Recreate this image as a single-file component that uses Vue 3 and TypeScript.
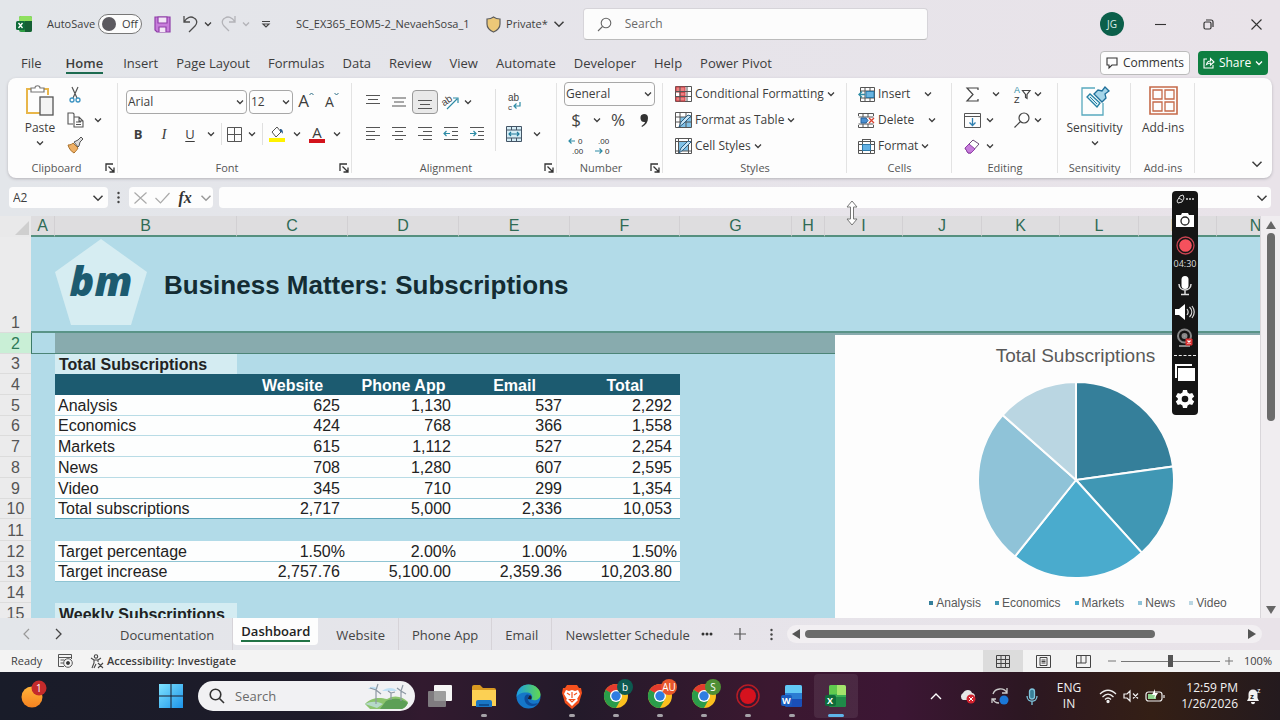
<script setup lang="ts">
import { h, ref } from 'vue'

const Chev = (p: { s?: number }) =>
  h('svg', { width: p.s ?? 8, height: p.s ?? 8, viewBox: '0 0 8 8', fill: 'none', stroke: 'currentColor', 'stroke-width': (p.s ?? 8) > 8 ? 1 : 1.3 }, [
    h('path', { d: 'M1 2.5 4 5.5 7 2.5' }),
  ])

const Launcher = () =>
  h('svg', { width: 10, height: 10, viewBox: '0 0 10 10', fill: 'none', stroke: '#333', 'stroke-width': 1.3 }, [
    h('path', { d: 'M1 8V1h7M3.5 3.5 8.5 8.5M9 4.5V9H4.5' }),
  ])

const Lines = (p: { d: string }) =>
  h('svg', { width: 16, height: 16, viewBox: '0 0 16 16', fill: 'none', stroke: '#555', 'stroke-width': 1.2 }, [h('path', { d: p.d })])

const menu = ['File', 'Home', 'Insert', 'Page Layout', 'Formulas', 'Data', 'Review', 'View', 'Automate', 'Developer', 'Help', 'Power Pivot']
const sheets = ['Documentation', 'Dashboard', 'Website', 'Phone App', 'Email', 'Newsletter Schedule']
const autoSave = ref(false)
const nameBox = ref('A2')
const zoom = ref(50)

const columns = [
  { name: 'A', w: 24 }, { name: 'B', w: 182 }, { name: 'C', w: 111 }, { name: 'D', w: 111 },
  { name: 'E', w: 111 }, { name: 'F', w: 110 }, { name: 'G', w: 112 }, { name: 'H', w: 33 },
  { name: 'I', w: 78 }, { name: 'J', w: 79 }, { name: 'K', w: 78 }, { name: 'L', w: 79 },
  { name: 'M', w: 78 }, { name: 'N', w: 78 },
]

interface Row { n: number; kind: string; label?: string; cells?: string[] }
const rows: Row[] = [
  { n: 3, kind: 'section short', label: 'Total Subscriptions' },
  { n: 4, kind: 'head', label: '', cells: ['Website', 'Phone App', 'Email', 'Total'] },
  { n: 5, kind: 'data', label: 'Analysis', cells: ['625', '1,130', '537', '2,292'] },
  { n: 6, kind: 'data short', label: 'Economics', cells: ['424', '768', '366', '1,558'] },
  { n: 7, kind: 'data', label: 'Markets', cells: ['615', '1,112', '527', '2,254'] },
  { n: 8, kind: 'data', label: 'News', cells: ['708', '1,280', '607', '2,595'] },
  { n: 9, kind: 'data strong', label: 'Video', cells: ['345', '710', '299', '1,354'] },
  { n: 10, kind: 'data total short', label: 'Total subscriptions', cells: ['2,717', '5,000', '2,336', '10,053'] },
  { n: 11, kind: 'blank tall' },
  { n: 12, kind: 'data percent strong', label: 'Target percentage', cells: ['1.50%', '2.00%', '1.00%', '1.50%'] },
  { n: 13, kind: 'data strong short', label: 'Target increase', cells: ['2,757.76', '5,100.00', '2,359.36', '10,203.80'] },
  { n: 14, kind: 'blank' },
  { n: 15, kind: 'section', label: 'Weekly Subscriptions' },
]

const series = [
  { name: 'Analysis', value: 2292, color: '#357f9a' },
  { name: 'Economics', value: 1558, color: '#4097b4' },
  { name: 'Markets', value: 2254, color: '#4aabcd' },
  { name: 'News', value: 2595, color: '#8fc3d8' },
  { name: 'Video', value: 1354, color: '#bad6e2' },
]
const total = series.reduce((sum, s) => sum + s.value, 0)
let turned = 0
const slices = series.map((s) => {
  const point = (v: number) => {
    const a = (v / total) * Math.PI * 2
    return `${(98 + 98 * Math.sin(a)).toFixed(2)} ${(98 - 98 * Math.cos(a)).toFixed(2)}`
  }
  const from = point(turned)
  turned += s.value
  return { color: s.color, d: `M98 98L${from}A98 98 0 0 1 ${point(turned)}Z` }
})

const chromes = [
  { letter: 'b', color: '#0d5a50' },
  { letter: 'AU', color: '#e8562a' },
  { letter: 'S', color: '#4f8f35' },
]
</script>

<template>
  <div class="window">
    <header class="titlebar">
      <svg class="xl" width="16" height="17" viewBox="0 0 16 17"><rect x="3" y="0" width="13" height="16" rx="2" fill="#2f9e44" /><path d="M3 2a2 2 0 0 1 2-2h9a2 2 0 0 1 2 2v3H3z" fill="#8fe05f" /><path d="M9 5h7v9a2 2 0 0 1-2 2H9z" fill="#155f34" /><rect y="5" width="9" height="9" rx="1.5" fill="#0f6b3a" /><path d="m2.5 7 4 5m0-5-4 5" stroke="#fff" stroke-width="1.3" /></svg>
      <label class="autosave"><span>AutoSave</span>
        <span class="pill"><input v-model="autoSave" type="checkbox" /><span>Off</span></span>
      </label>
      <button class="tb save" aria-label="Save"><svg width="17" height="17" viewBox="0 0 17 17"><path d="M1 1h15v15H3l-2-2z" fill="#c77ddb" stroke="#8f3fa8" stroke-width="1.2" /><path d="M4 1h9v6H4zM5 16v-5h7v5" fill="#f2e6f6" stroke="#8f3fa8" stroke-width="1.2" /></svg></button>
      <button class="tb" aria-label="Undo"><svg width="18" height="18" viewBox="0 0 18 18" fill="none" stroke="#4c4c4c" stroke-width="1.3"><path d="M2 1v6h6M2 7C5 2 9 1 12 3c4 2 3 6 1 8l-6 6" /></svg><Chev /></button>
      <button class="tb off" aria-label="Redo"><svg width="18" height="18" viewBox="0 0 18 18" fill="none" stroke="currentColor" stroke-width="1.3"><path d="M15 1v6H9M15 7C12 2 8 1 5 3c-4 2-3 6-1 8l5 5" /></svg><Chev /></button>
      <button class="tb custom" aria-label="Customize toolbar"><svg width="8" height="9" viewBox="0 0 8 9" fill="none" stroke="#444" stroke-width="1.2"><path d="M0 1.5h8M1 4h6L4 7z" /></svg></button>
      <span class="docname">SC_EX365_EOM5-2_NevaehSosa_1</span>
      <button class="private"><svg width="15" height="17" viewBox="0 0 15 17"><path d="M7.5 1C5 3 3 3 1 3v5c0 4 3 6.500 6.500 8C11 14.500 14 12 14 8V3c-2 0-4 0-6.500-2z" fill="#ecc878" stroke="#5c5c5c" stroke-width="1.2" /></svg><span>Private*</span><Chev :s="12" /></button>
      <label class="search"><svg width="15" height="15" viewBox="0 0 15 15" fill="none" stroke="#666" stroke-width="1.1"><circle cx="9" cy="6" r="4.800" /><path d="M5.500 9.500 1 14" /></svg><input type="text" placeholder="Search" aria-label="Search" /></label>
      <div class="winctl">
        <button class="avatar">JG</button>
        <button aria-label="Minimize"><svg width="11" height="11" viewBox="0 0 11 11" stroke="#333" stroke-width="1.1"><path d="M0 5.500h11" /></svg></button>
        <button aria-label="Restore"><svg width="11" height="11" viewBox="0 0 11 11" fill="none" stroke="#333" stroke-width="1.2"><rect x="1" y="3" width="7" height="7" rx="1.500" /><path d="M3 1h5a2 2 0 0 1 2 2v5" /></svg></button>
        <button aria-label="Close"><svg width="11" height="11" viewBox="0 0 11 11" stroke="#333" stroke-width="1.1"><path d="m.5.5 10 10m0-10-10 10" /></svg></button>
      </div>
    </header>

    <nav class="menu">
      <button v-for="m in menu" :key="m" :class="{ active: m === 'Home' }">{{ m }}</button>
      <div class="menu-right">
        <button class="comments"><svg width="12" height="12" viewBox="0 0 12 12" fill="none" stroke="#333" stroke-width="1.1"><path d="M1 1h10v7H6l-3 3V8H1z" /></svg>Comments</button>
        <button class="share"><svg width="12" height="12" viewBox="0 0 12 12" fill="none" stroke="#fff" stroke-width="1.100"><path d="M4 2H1v9h9V8M3.500 7.500C4 5 5.500 4 7.500 4V1.500L11 5 7.500 8V6C6 6 5 6.500 3.500 7.500z" /></svg>Share<Chev /></button>
      </div>
    </nav>

    <section class="ribbon">
      <div class="group clipboard">
        <div class="body">
          <button class="big"><svg width="28" height="31" viewBox="0 0 28 31" fill="none"><path d="M6 4H1v24h13M17 4h5v6" stroke="#e8b64a" stroke-width="2" /><path d="M5 7V3h4c0-3 5-3 5 0h4v4z" fill="#fff" stroke="#777" stroke-width="1.200" /><rect x="14" y="12" width="13" height="18" fill="#f4f4f4" stroke="#555" stroke-width="1.300" /></svg><span>Paste</span><Chev /></button>
          <div class="stack">
            <button aria-label="Cut"><svg width="16" height="16" viewBox="0 0 16 16" fill="none"><path d="M5 0l5 11M11 0 6 11" stroke="#555" stroke-width="1.200" /><circle cx="5" cy="13" r="2" stroke="#3c93c2" stroke-width="1.300" /><circle cx="11" cy="13" r="2" stroke="#3c93c2" stroke-width="1.300" /></svg></button>
            <button aria-label="Copy"><svg width="17" height="16" viewBox="0 0 17 16" fill="none" stroke="#555" stroke-width="1.100"><path d="M6 12H1V1h5l1 1v10M7 5h5l4 4v6H7zM12 5v4h4M9 10h5M9 12.500h5" /></svg></button>
            <button aria-label="Format Painter"><svg width="16" height="16" viewBox="0 0 16 16"><path d="M1 8c3 0 4-1 5-2l5 5c-1 2-2 3-4 5C5 15 2 12 1 8z" fill="#eeb066" stroke="#a9712c" /><path d="m7 5 4-2 3-3 2 2-3 3-1 4-1 1z" fill="#ddd" stroke="#555" /></svg></button>
          </div>
          <button class="cv" aria-label="Copy options"><Chev /></button>
        </div>
        <div class="glabel"><span>Clipboard</span><Launcher class="launch" /></div>
      </div>

      <div class="group font">
        <div class="body rows">
          <div class="row">
            <label class="sel w-font"><select aria-label="Font"><option>Arial</option></select><Chev /></label>
            <label class="sel w-size"><select aria-label="Font size"><option>12</option></select><Chev /></label>
            <button class="ib letter" aria-label="Increase font size"><span class="l17">A</span><svg width="5" height="10" viewBox="0 0 5 10" fill="none" stroke="#2d6e86"><path d="M.5 5 2.500 3l2 2" /></svg></button>
            <button class="ib letter" aria-label="Decrease font size"><span class="l15">A</span><svg width="5" height="10" viewBox="0 0 5 10" fill="none" stroke="#2d6e86"><path d="m.5 3 2 2 2-2" /></svg></button>
          </div>
          <div class="row">
            <button class="ib bold">B</button><button class="ib ital">I</button><button class="ib under">U</button><button class="cv" aria-label="Underline options"><Chev /></button>
            <i class="sep" />
            <button class="ib w20" aria-label="Borders"><svg width="15" height="15" viewBox="0 0 15 15" fill="none" stroke="#555"><path d="M.5.5h14v14H.5zM7.500 1v13M1 7.500h13" /></svg></button><button class="cv" aria-label="Border options"><Chev /></button>
            <i class="sep" />
            <button class="ib w24" aria-label="Fill color"><svg width="16" height="16" viewBox="0 0 16 16"><path d="m3 6 5-5 4 5-5 5z" fill="#fff" stroke="#555" /><path d="M11 3c2 0 3 1 3 5-1-2-2-2-3-2z" fill="#2d5d8c" /><path d="M0 12h16v4H0z" fill="#fff200" /></svg></button><button class="cv" aria-label="Fill options"><Chev /></button>
            <button class="ib w24 fcolor" aria-label="Font color"><span>A</span><i /></button><button class="cv" aria-label="Font color options"><Chev /></button>
          </div>
        </div>
        <div class="glabel"><span>Font</span><Launcher class="launch" /></div>
      </div>

      <div class="group align">
        <div class="body">
          <div class="rows">
            <div class="row">
              <button class="ib" aria-label="Top align"><Lines d="M1 1.500h14M3 5.500h10M1 9.500h14" /></button>
              <button class="ib" aria-label="Middle align"><Lines d="M1 4h14M3 8h10M1 12h14" /></button>
              <button class="ib pressed" aria-label="Bottom align"><Lines d="M1 6.500h14M3 10.500h10M1 14.500h14" /></button>
              <button class="ib w24" aria-label="Orientation"><svg class="arial" width="17" height="16" viewBox="0 0 17 16" fill="none"><path d="m5 15 10-10M11 4h5v5" stroke="#2e8ca6" stroke-width="1.200" /><text x="0" y="10" transform="rotate(-35 5 8)" font-size="10" fill="#444">ab</text></svg></button>
              <button class="cv w12" aria-label="Orientation options"><Chev /></button>
            </div>
            <div class="row">
              <button class="ib" aria-label="Align left"><Lines d="M1 1.500h14M1 5.500h9M1 9.500h14M1 13.500h9" /></button>
              <button class="ib" aria-label="Center"><Lines d="M1 1.500h14M4 5.500h8M1 9.500h14M4 13.500h8" /></button>
              <button class="ib" aria-label="Align right"><Lines d="M1 1.500h14M6 5.500h9M1 9.500h14M6 13.500h9" /></button>
              <button class="ib" aria-label="Decrease indent"><svg width="16" height="16" viewBox="0 0 16 16" fill="none" stroke="#555" stroke-width="1.200"><path d="M1 1.500h14M9 5.500h6M9 9.500h6M1 13.500h14" /><path d="M7 7.500H1M3.500 5 1 7.500 3.500 10" stroke="#2e8ca6" /></svg></button>
              <button class="ib" aria-label="Increase indent"><svg width="16" height="16" viewBox="0 0 16 16" fill="none" stroke="#555" stroke-width="1.200"><path d="M1 1.500h14M9 5.500h6M9 9.500h6M1 13.500h14" /><path d="M1 7.500h6M4.500 5 7 7.500 4.500 10" stroke="#2e8ca6" /></svg></button>
            </div>
          </div>
          <i class="sep long" />
          <div class="rows">
            <div class="row"><button class="ib" aria-label="Wrap text"><svg class="arial" width="16" height="18" viewBox="0 0 16 18" fill="none"><text x="2" y="8" font-size="10" fill="#444">ab</text><text x="2" y="17" font-size="8" fill="#444">c</text><path d="M14 9v4H8M10.500 10.500 8 13l2.500 2.500" stroke="#2e8ca6" stroke-width="1.200" /></svg></button></div>
            <div class="row"><button class="ib" aria-label="Merge and center"><svg width="16" height="16" viewBox="0 0 16 16" fill="none" stroke="#456"><path d="M.5.5h15v15H.5z" fill="#d5edf6" /><path d="M1 4h14M1 12h14M5.500 1v3M10.500 1v3M5.500 12v3M10.500 12v3" /><path d="M3 8h10M5 6 3 8l2 2M11 6l2 2-2 2" stroke="#1f7a9a" stroke-width="1.200" /></svg></button><button class="cv far" aria-label="Merge options"><Chev /></button></div>
          </div>
        </div>
        <div class="glabel"><span>Alignment</span><Launcher class="launch" /></div>
      </div>

      <div class="group number">
        <div class="body three">
          <label class="sel"><select aria-label="Number format"><option>General</option></select><Chev /></label>
          <div class="row">
            <button class="ib big-ch" aria-label="Currency">$</button><button class="cv" aria-label="Currency options"><Chev /></button><button class="ib big-ch" aria-label="Percent">%</button><button class="ib" aria-label="Comma style"><svg width="10" height="13" viewBox="0 0 10 13"><path d="M5 0a4 4 0 0 1 4 4c0 4-2 7-6 9l-.5-1C5 10 6 9 6 8a4 4 0 1 1-1-8z" fill="#333" /></svg></button>
          </div>
          <div class="row">
            <button class="ib" aria-label="Increase decimal"><svg class="arial" width="17" height="18" viewBox="0 0 17 18" fill="none"><path d="M7 4H1M3.500 1.500 1 4l2.500 2.500" stroke="#2e8ca6" stroke-width="1.200" /><text x="10" y="7" font-size="8" fill="#333">0</text><text x="4" y="17" font-size="8" fill="#333">.00</text></svg></button>
            <button class="ib" aria-label="Decrease decimal"><svg class="arial" width="17" height="18" viewBox="0 0 17 18" fill="none"><path d="M1 14h7M5.500 11.500 8 14l-2.500 2.500" stroke="#2e8ca6" stroke-width="1.200" /><text x="4" y="7" font-size="8" fill="#333">.00</text><text x="11" y="17" font-size="8" fill="#333">0</text></svg></button>
          </div>
        </div>
        <div class="glabel"><span>Number</span><Launcher class="launch" /></div>
      </div>

      <div class="group styles">
        <div class="body three">
          <button class="cmd"><svg width="17" height="16" viewBox="0 0 17 16" stroke="#555"><path d="M.5.5h16v15H.5z" fill="#fff" /><path d="M1 1h9v5H1zM5 6h5v4H5zM1 11h9v4H1z" fill="#ef7f7f" stroke="#c33d43" /><path d="M.5 5.500h16M.5 10.500h16M5 .5v15M12 .5v15" fill="none" /></svg>Conditional Formatting<Chev /></button>
          <button class="cmd"><svg width="17" height="16" viewBox="0 0 17 16" stroke="#555"><path d="M.5.5h16v15H.5z" fill="#fff" /><path d="M5 5h11v10H5z" fill="#7fc0e6" stroke="none" /><path d="M.5 5h16M.5 10h16M5 .5v15M11 .5v15" fill="none" /><path d="m16 4-8 8-4 3 2-5 7-7z" fill="#c7e3f4" stroke="#2d5f82" /></svg>Format as Table<Chev /></button>
          <button class="cmd"><svg width="17" height="16" viewBox="0 0 17 16" stroke="#555"><path d="M.5.5h16v15H.5z" fill="#fff" /><path d="M4 4h10v9H4z" fill="#7fc0e6" stroke="none" /><path d="M.5 3.500h16M.5 13h16M3.500 .5v15M13.500 .5v15" fill="none" /><path d="m16 4-8 8-4 3 2-5 7-7z" fill="#c7e3f4" stroke="#2d5f82" /></svg>Cell Styles<Chev /></button>
        </div>
        <div class="glabel"><span>Styles</span></div>
      </div>

      <div class="group cells">
        <div class="body three">
          <button class="cmd wide"><svg width="17" height="15" viewBox="0 0 17 15" stroke="#555" fill="none"><path d="M2.500.5h14v14h-14zM2.500 4h14M2.500 11h14M7 .5v14M12 .5v14" /><path d="M8 4.500h8v6H8z" fill="#69b4e0" stroke="#2b78a8" /><path d="M7 7.500H1M4 4.500 1 7.500l3 3" stroke="#2e8ca6" stroke-width="1.400" /></svg><span>Insert</span><Chev /></button>
          <button class="cmd wide del"><svg width="17" height="15" viewBox="0 0 17 15" stroke="#555" fill="none"><path d="M.5 3V.5h15V3M.5 12v2.500h15V12M5 .5V4M10 .5V4M5 11v3.500M10 11v3.500M.5 4h15M.5 11h15" /><path d="M3 5h5l2 2.500L8 10H3z" fill="#4a8fd0" stroke="#27609a" /><path d="m11 5 5 5m0-5-5 5" stroke="#d9422f" stroke-width="1.300" /></svg><span>Delete</span><Chev /></button>
          <button class="cmd"><svg width="17" height="16" viewBox="0 0 17 16" stroke="#555" fill="none"><path d="M.5 3.500h16v12H.5zM.5 12.500h16M4.500 1v14M12.500 1v14M.5 6.500h16M4.500 1.500h8" /><path d="M4.500 6.500h8v6h-8z" fill="#62b1e4" stroke="#2b78a8" /></svg>Format<Chev /></button>
        </div>
        <div class="glabel"><span>Cells</span></div>
      </div>

      <div class="group editing">
        <div class="body">
          <div class="three ecol">
            <div class="row spread"><button class="ib w24" aria-label="AutoSum"><svg width="13" height="15" viewBox="0 0 13 15" fill="none" stroke="#444" stroke-width="1.200"><path d="M12 3V1H1l6 6.500L1 14h11v-2" /></svg></button><button class="cv" aria-label="AutoSum options"><Chev /></button></div>
            <div class="row"><button class="ib w24" aria-label="Fill"><svg width="17" height="15" viewBox="0 0 17 15" fill="none" stroke="#555"><path d="M.5.5h16v14H.5zM.5 3.500h16" /><path d="M8.500 5v7M5.500 9.500l3 3 3-3" stroke="#2e7fb0" stroke-width="1.300" /></svg></button><button class="cv w12" aria-label="Fill options"><Chev /></button></div>
            <div class="row"><button class="ib w24" aria-label="Clear"><svg width="16" height="16" viewBox="0 0 16 16"><path d="m1 10 8-8 6 4-8 9-3 0z" fill="#fff" stroke="#6d4a78" /><path d="m1 10 4-4 6 5-4 4H4z" fill="#c77ddb" stroke="#8f3fa8" /></svg></button><button class="cv w12" aria-label="Clear options"><Chev /></button></div>
          </div>
          <div class="three">
            <div class="row"><button class="ib w20" aria-label="Sort and filter"><svg class="arial" width="17" height="18" viewBox="0 0 17 18" fill="none"><text x="0" y="8" font-size="9" fill="#2e8ca6">A</text><text x="0" y="18" font-size="9" fill="#333">Z</text><path d="M8.500 5.500H16l-3 4v4l-1.500-1v-3z" stroke="#444" stroke-width="1.200" /></svg></button><button class="cv w12" aria-label="Sort options"><Chev /></button></div>
            <div class="row"><button class="ib w20" aria-label="Find"><svg width="16" height="16" viewBox="0 0 16 16" fill="none" stroke="#444" stroke-width="1.200"><circle cx="10" cy="6" r="5" /><path d="M6.500 9.500.5 15.500" /></svg></button><button class="cv w12" aria-label="Find options"><Chev /></button></div>
            <div class="row" />
          </div>
        </div>
        <div class="glabel"><span>Editing</span></div>
      </div>

      <div class="group sens">
        <div class="body center">
          <button class="big"><svg width="28" height="31" viewBox="0 0 28 31" fill="none"><path d="M14 3H1v27h21V18" stroke="#58a9be" stroke-width="1.300" /><path d="m6 12 3-3 10 9-3 4z" fill="#dff1f8" stroke="#2580a3" stroke-width="1.300" /><path d="m9 12 7 7" stroke="#2580a3" /><path d="m13 9 4-4 4 1 3-4 4 4-4 3 1 4-4 4z" fill="#a5d5e9" stroke="#1f6f9a" stroke-width="1.300" /></svg><span>Sensitivity</span><Chev /></button>
        </div>
        <div class="glabel"><span>Sensitivity</span></div>
      </div>

      <div class="group addins">
        <div class="body center">
          <button class="big"><svg width="28" height="31" viewBox="0 0 28 31" fill="none" stroke="#c56a49" stroke-width="1.300"><path d="M1 2h27v27H1z" stroke-width="1.600" /><path d="M4 5h9v9H4zM16 5h9v9h-9zM4 17h9v9H4zM16 17h9v9h-9z" /></svg><span>Add-ins</span></button>
        </div>
        <div class="glabel"><span>Add-ins</span></div>
      </div>
      <button class="collapse" aria-label="Collapse ribbon"><Chev :s="12" /></button>
    </section>

    <section class="formula">
      <label class="namebox"><input v-model="nameBox" type="text" aria-label="Name box" /><Chev :s="12" /></label>
      <svg class="grip" width="3" height="13" viewBox="0 0 3 13" fill="#444"><circle cx="1.500" cy="2" r="1.200" /><circle cx="1.500" cy="6.500" r="1.200" /><circle cx="1.500" cy="11" r="1.200" /></svg>
      <div class="fxbox">
        <button aria-label="Cancel"><svg width="13" height="12" viewBox="0 0 13 12" stroke="#aaa" stroke-width="1.200"><path d="m.5.5 12 11m0-11-12 11" /></svg></button>
        <button aria-label="Enter"><svg width="15" height="12" viewBox="0 0 15 12" fill="none" stroke="#aaa" stroke-width="1.200"><path d="m.5 6 5 5 9-10" /></svg></button>
        <button class="fx" aria-label="Insert function">fx</button>
        <button class="dim" aria-label="Function options"><Chev :s="12" /></button>
      </div>
      <label class="fxinput"><input type="text" aria-label="Formula bar" /><Chev :s="12" /></label>
    </section>

    <main class="sheet-area">
      <div class="sheet">
        <table class="grid">
          <colgroup><col class="rowhead" /><col v-for="c in columns" :key="c.name" :style="{ width: c.w + 'px' }" /></colgroup>
          <thead><tr><th class="corner"><svg width="14" height="14" viewBox="0 0 14 14"><path d="M14 0v14H0z" fill="#cfcfcf" /></svg></th><th v-for="c in columns" :key="c.name" scope="col">{{ c.name }}</th></tr></thead>
          <tbody>
            <tr class="r1">
              <th scope="row">1</th>
              <td :colspan="14">
                <div class="banner">
                  <div class="logo"><svg width="92" height="86" viewBox="0 0 92 86"><path d="M46 0 92 33 76 86H16L0 33z" fill="#d6edf2" /></svg><span>bm</span></div>
                  <h1>Business Matters: Subscriptions</h1>
                </div>
              </td>
            </tr>
            <tr class="r2"><th scope="row">2</th><td class="first" /><td class="picked" :colspan="13" /></tr>
            <tr v-for="r in rows" :key="r.n" :class="r.kind">
              <th scope="row">{{ r.n }}</th>
              <td />
              <template v-if="r.cells"><td class="lbl">{{ r.label }}</td><td v-for="(c, i) in r.cells" :key="i" class="num">{{ c }}</td><td :colspan="8" /></template>
              <template v-else-if="r.label"><td class="lbl">{{ r.label }}</td><td :colspan="12" /></template>
              <td v-else :colspan="13" />
            </tr>
          </tbody>
        </table>
        <figure class="chart">
          <figcaption>Total Subscriptions</figcaption>
          <svg width="196" height="196" viewBox="0 0 196 196" stroke="#fdfdfd" stroke-width="2"><path v-for="s in slices" :key="s.color" :d="s.d" :fill="s.color" /></svg>
          <ul><li v-for="s in series" :key="s.name"><i :style="{ background: s.color }" />{{ s.name }}</li></ul>
        </figure>
      </div>
      <div class="vscroll">
        <svg width="10" height="8" viewBox="0 0 10 8"><path d="m5 0 5 8H0z" fill="#666" /></svg>
        <div class="vtrack"><i /></div>
        <svg width="10" height="8" viewBox="0 0 10 8"><path d="M0 0h10L5 8z" fill="#666" /></svg>
      </div>
    </main>

    <nav class="sheettabs">
      <button class="nav dim" aria-label="Previous sheet"><svg width="7" height="10" viewBox="0 0 7 10" fill="none" stroke="currentColor" stroke-width="1.200"><path d="M6 0 1 5l5 5" /></svg></button>
      <button class="nav" aria-label="Next sheet"><svg width="7" height="10" viewBox="0 0 7 10" fill="none" stroke="currentColor" stroke-width="1.300"><path d="m1 0 5 5-5 5" /></svg></button>
      <div class="tabs"><button v-for="s in sheets" :key="s" :class="{ active: s === 'Dashboard' }"><span>{{ s }}</span></button></div>
      <button class="more" aria-label="More sheets"><svg width="12" height="4" viewBox="0 0 12 4" fill="#333"><circle cx="2" cy="2" r="1.500" /><circle cx="6" cy="2" r="1.500" /><circle cx="10" cy="2" r="1.500" /></svg></button>
      <button class="add" aria-label="New sheet"><svg width="12" height="12" viewBox="0 0 12 12" stroke="#555" stroke-width="1.200"><path d="M0 6h12M6 0v12" /></svg></button>
      <svg class="grip" width="3" height="13" viewBox="0 0 3 13" fill="#444"><circle cx="1.500" cy="2" r="1.200" /><circle cx="1.500" cy="6.500" r="1.200" /><circle cx="1.500" cy="11" r="1.200" /></svg>
      <div class="hscroll">
        <svg width="8" height="10" viewBox="0 0 8 10"><path d="M8 0v10L0 5z" fill="#555" /></svg>
        <div class="htrack"><i /></div>
        <svg width="8" height="10" viewBox="0 0 8 10"><path d="M0 0v10l8-5z" fill="#555" /></svg>
      </div>
    </nav>

    <footer class="status">
      <span class="ready">Ready</span>
      <svg class="macro" width="15" height="14" viewBox="0 0 15 14" fill="none" stroke="#555"><path d="M6 12.500H.5V.5h13V5M.5 3.500h13M2.500 6h4M2.500 9h3" /><circle cx="10" cy="9" r="4.300" fill="#f3f3f3" /><circle cx="10" cy="9" r="1.600" fill="#333" /></svg>
      <svg width="14" height="15" viewBox="0 0 14 15" fill="none" stroke="#444" stroke-width="1.100"><circle cx="6" cy="2.500" r="1.700" /><path d="M1 4l3 2v3l-2 5M11 4 8 6v2M4 6h4M4 14l2-4M8 9l5 5M13 9l-5 5" /></svg>
      <button class="access">Accessibility: Investigate</button>
      <div class="views">
        <button class="on" aria-label="Normal"><svg width="14" height="13" viewBox="0 0 14 13" fill="none" stroke="#444"><path d="M.5.5h13v12H.5zM.5 4.500h13M.5 8.500h13M5 .5v12M9.500.5v12" /></svg></button>
        <button aria-label="Page layout"><svg width="15" height="13" viewBox="0 0 15 13" fill="none" stroke="#444"><path d="M.5.5h14v12H.5zM4 2.500h7v8H4zM5.500 5h4M5.500 6.500h4M5.500 8h4" /></svg></button>
        <button aria-label="Page break"><svg width="15" height="13" viewBox="0 0 15 13" fill="none" stroke="#444"><path d="M.5.5h14v12H.5zM.5 8H10V.5M5 .5V8" /></svg></button>
      </div>
      <button class="pm" aria-label="Zoom out"><svg width="8" height="8" viewBox="0 0 8 8" stroke="#777"><path d="M0 4h8" /></svg></button>
      <input v-model="zoom" class="zoom" type="range" aria-label="Zoom" />
      <button class="pm" aria-label="Zoom in"><svg width="8" height="8" viewBox="0 0 8 8" stroke="#777"><path d="M0 4h8M4 0v8" /></svg></button>
      <span class="pct">100%</span>
    </footer>

    <footer class="taskbar">
      <button class="weather" aria-label="Weather"><svg width="28" height="28" viewBox="0 0 28 28"><defs><linearGradient id="sun" x2="0" y2="1"><stop stop-color="#ffb43a" /><stop offset="1" stop-color="#f58220" /></linearGradient></defs><circle cx="11" cy="17" r="10.500" fill="url(#sun)" /><circle cx="18" cy="8" r="7.500" fill="#c42b2b" /><text x="15" y="12" font-size="10" fill="#fff">1</text></svg></button>
      <div class="apps">
        <button aria-label="Start"><svg width="24" height="24" viewBox="0 0 24 24"><defs><linearGradient id="win" x2="1" y2="1"><stop stop-color="#7fe3ff" /><stop offset="1" stop-color="#1c93e8" /></linearGradient></defs><path d="M0 0h11.500v11.500H0zM12.500 0H24v11.500H12.500zM0 12.500h11.500V24H0zM12.500 12.500H24V24H12.500z" fill="url(#win)" /></svg></button>
        <label class="tsearch"><svg width="16" height="16" viewBox="0 0 16 16" fill="none" stroke="#333" stroke-width="1.600"><circle cx="6.500" cy="6.500" r="5.300" /><path d="m10.500 10.500 4.500 4.500" /></svg><input type="text" placeholder="Search" aria-label="Search Windows" />
          <svg width="46" height="25" viewBox="0 0 46 25"><path d="M4 5c4-4 8-2 10 0zM18 7c5-4 12-4 15 0z" fill="#bfe0f5" /><path d="M1 20c8-8 16-6 22-5 8-5 16-2 21 3-1 4-4 7-8 7H6z" fill="#8cc46e" /><path d="M22 17c8-4 17-2 22 2-2 4-4 5-6 6H16z" fill="#5c9f57" /><path d="M1 20c6-3 12-3 18 0l-6 4z" fill="#b6d9c9" /><g stroke="#8d98a3" stroke-width="1.200" fill="none"><path d="M12 20V6M12 6l-6-2M12 6l2-6M12 6l5 4M37 17V7M37 7l-4-3M37 7l2-6M37 7l5 3M27 16V9M27 9l-3-2M27 9l4-1" /></g></svg>
        </label>
        <button aria-label="Task view"><svg width="26" height="24" viewBox="0 0 26 24"><rect x="7" y="1" width="18" height="16" rx="1" fill="#f5f5f5" /><rect x="1" y="7" width="18" height="16" rx="1" fill="#8d8d8d" fill-opacity=".85" /></svg></button>
        <button class="run" aria-label="File Explorer"><svg width="26" height="24" viewBox="0 0 26 24"><path d="M1 3a2 2 0 0 1 2-2h6l3 3h11a2 2 0 0 1 2 2v15H1z" fill="#d99a21" /><path d="M1 6h24v16H1z" fill="#fcd053" /><path d="M5 23v-5a2 2 0 0 1 2-2h12a2 2 0 0 1 2 2v5z" fill="#1976c5" /><path d="M8 20h10v2H8z" fill="#0d4f92" /></svg></button>
        <button aria-label="Edge"><svg width="25" height="25" viewBox="0 0 25 25"><defs><linearGradient id="edge" x2="1"><stop stop-color="#1b9de2" /><stop offset="1" stop-color="#62d84e" /></linearGradient></defs><circle cx="12.500" cy="12.500" r="12" fill="#1577c8" /><path d="M.5 13C1 5 6 .5 12.500.5c7 0 12 5 12 10 0 5-6 7-9 5 2-3 0-7-4-7C6 8 2 10 .5 13z" fill="url(#edge)" /><path d="M9 12c-2 5 2 10 7 10 3 0 5-1 6-3-5 2-10 0-10-4 0-2 1-3 1-4-2-1-3 0-4 1z" fill="#0c4d9c" /><path d="M12 15c0-2 1-3 2-4 2 1 2 3 1 4.500z" fill="#1f1c2a" /></svg></button>
        <button class="run" aria-label="Brave"><svg width="22" height="25" viewBox="0 0 22 25"><path d="m6 1 10 0 2 3 2 0 1 5-1 3-2 7-7 6-7-6-2-7-1-3 1-5 2 0z" fill="#f4511e" /><path d="m5 6 3 1 3-1 3 1 3-1 2 4-3 5 1 1-3 3-3 3-3-3-3-3 1-1-3-5z" fill="#fff" /><path d="m6 9 3 2M16 9l-3 2M11 8v6M8.500 15.500h5L11 18z" stroke="#f4511e" stroke-width="1.200" fill="none" /></svg></button>
        <button v-for="c in chromes" :key="c.letter" class="run chrome" :aria-label="'Chrome ' + c.letter"><svg width="30" height="30" viewBox="0 0 30 30"><circle cx="13" cy="17" r="12" fill="#fbbf1e" /><path d="M13 17 2.600 11A12 12 0 0 1 23.400 11H13z" fill="#e33b2e" /><path d="M2.600 11A12 12 0 0 0 13 29l5-9z" fill="#2a9d4a" /><path d="M2.600 11 9 20l4-3z" fill="#2a9d4a" /><circle cx="13" cy="17" r="6" fill="#fff" /><circle cx="13" cy="17" r="4.700" fill="#2f7de1" /><circle cx="22" cy="8" r="8" :fill="c.color" /><text x="22" y="12" font-size="10" fill="#fff" text-anchor="middle">{{ c.letter }}</text></svg></button>
        <button class="run" aria-label="Recorder"><svg width="24" height="24" viewBox="0 0 24 24"><circle cx="12" cy="12" r="11" fill="none" stroke="#b51c25" stroke-width="1.500" /><circle cx="12" cy="12" r="8" fill="#d5121e" /></svg></button>
        <button class="run" aria-label="Word"><svg width="22" height="24" viewBox="0 0 22 24"><rect x="4" y="1" width="17" height="22" rx="2" fill="#2b7cd3" /><path d="M4 3a2 2 0 0 1 2-2h13a2 2 0 0 1 2 2v6H4z" fill="#62c8f5" /><path d="M4 15h17v6a2 2 0 0 1-2 2H6a2 2 0 0 1-2-2z" fill="#1a4fb8" /><rect y="11" width="11" height="11" rx="2" fill="#1b5cbe" /><text x="1" y="20" font-size="9" font-weight="700" fill="#fff">W</text></svg></button>
        <button class="run current" aria-label="Excel"><svg width="22" height="24" viewBox="0 0 22 24"><rect x="4" y="1" width="17" height="22" rx="2" fill="#39b054" /><path d="M4 3a2 2 0 0 1 2-2h6v9H4z" fill="#5fca4e" /><path d="M12 1h7a2 2 0 0 1 2 2v8h-9z" fill="#a4e36c" /><path d="M4 13h17v8a2 2 0 0 1-2 2H6a2 2 0 0 1-2-2z" fill="#1f8a48" /><rect y="11" width="11" height="11" rx="2" fill="#0f6b3a" /><text x="2" y="20" font-size="9" font-weight="700" fill="#fff">X</text></svg></button>
      </div>
      <div class="tray">
        <button class="w32" aria-label="Hidden icons"><svg width="12" height="8" viewBox="0 0 12 8" fill="none" stroke="#fff" stroke-width="1.400"><path d="m1 7 5-5 5 5" /></svg></button>
        <button class="w32" aria-label="OneDrive"><svg width="18" height="16" viewBox="0 0 18 16"><path d="M4 12a4 4 0 0 1 0-7c2-4 8-4 9 0 3 0 4 4 2 7z" fill="#e6e6e6" /><circle cx="12" cy="11" r="4.500" fill="#d2232f" /><path d="m10 9 4 4m0-4-4 4" stroke="#fff" /></svg></button>
        <button class="w32" aria-label="Update"><svg width="18" height="18" viewBox="0 0 18 18" fill="none" stroke="#ccc" stroke-width="1.300"><path d="M2 7c2-6 11-7 14-1M16 1v5h-5M8 16c-3 0-5-1-6-4M1 16v-4h4" /><circle cx="13" cy="13" r="4.500" fill="#1b78d8" stroke="none" /></svg></button>
        <button class="w32" aria-label="Microphone"><svg width="12" height="17" viewBox="0 0 12 17" fill="none" stroke="#7fc4dc" stroke-width="1.300"><rect x="3.500" y="1" width="5" height="10" rx="2.500" fill="#3a7f98" /><path d="M1 8c0 7 10 7 10 0M6 13v4" /></svg></button>
        <button class="lang">ENG<br />IN</button>
        <button class="net" aria-label="Network, volume and battery">
          <svg width="18" height="14" viewBox="0 0 18 14" fill="none" stroke="#eee" stroke-width="1.300"><path d="M1 5c5-5 11-5 16 0M3.500 8c4-4 7-4 11 0M6 10.500c2-2 4-2 6 0" /><circle cx="9" cy="12.500" r="1" fill="#eee" /></svg>
          <svg width="16" height="12" viewBox="0 0 16 12" fill="none" stroke="#eee" stroke-width="1.200"><path d="M1 4h3l3-3v10L4 8H1zM10 3.500l5 5m0-5-5 5" /></svg>
          <svg width="20" height="14" viewBox="0 0 20 14" fill="none" stroke="#eee" stroke-width="1.200"><rect x="1" y="3" width="16" height="9" rx="2.500" /><path d="M3 5h8v5H3z" fill="#8fd48f" stroke="none" /><path d="M19 6v3" /><path d="m10 0-3 6h3l-1 4 4-6h-3z" fill="#fff" stroke="none" /></svg>
        </button>
        <button class="clock">12:59 PM<br />1/26/2026</button>
        <button class="bell" aria-label="Notifications"><svg class="arial" width="15" height="17" viewBox="0 0 15 17"><path d="M1 13 2.500 10V6a4.500 4.500 0 0 1 9 0v4l1.500 3zM5 14h4c0 3-4 3-4 0z" fill="#f2f2f2" /><text x="4" y="11" font-size="8" font-weight="700" fill="#222">z</text><text x="11" y="5" font-size="7" fill="#fff">z</text></svg></button>
      </div>
    </footer>

    <aside class="recorder">
      <svg width="18" height="10" viewBox="0 0 18 10" fill="none" stroke="#ddd"><path d="m1 7 3-5 3-1 1 3-2 4-4 1zM3 4l3 2" /><path d="M10 5h8" stroke-dasharray="2 1" stroke-width="1.500" /></svg>
      <button aria-label="Screenshot"><svg width="20" height="16" viewBox="0 0 20 16"><path d="M1 3h5l1-2h6l1 2h5v12H1z" fill="#fff" /><circle cx="10" cy="9" r="4" fill="none" stroke="#222" stroke-width="1.300" /></svg></button>
      <button aria-label="Stop recording"><svg width="19" height="19" viewBox="0 0 19 19"><circle cx="9.500" cy="9.500" r="8.500" fill="none" stroke="#c94452" stroke-width="1.300" /><circle cx="9.500" cy="9.500" r="6.300" fill="#f5515d" /></svg></button>
      <span>04:30</span>
      <button aria-label="Microphone on"><svg width="16" height="20" viewBox="0 0 16 20" fill="none" stroke="#ddd" stroke-width="1.500"><rect x="4.500" y="0" width="7" height="13" rx="3.500" fill="#fff" stroke="none" /><path d="M2 8c0 8 12 8 12 0M8 14v4M4 18.500h8" /></svg></button>
      <button aria-label="Speaker"><svg width="20" height="16" viewBox="0 0 20 16"><path d="M0 5h4l6-5v16l-6-5H0z" fill="#fff" /><path d="M12 5c1.500 2 1.500 4 0 6M14.500 3c3 3 3 7 0 10M17 2c3 4 3 8 0 12" fill="none" stroke="#ddd" stroke-width="1.200" /></svg></button>
      <button aria-label="Webcam off"><svg width="18" height="20" viewBox="0 0 18 20" fill="none" stroke="#888" stroke-width="2"><circle cx="8.500" cy="8" r="6.500" /><circle cx="8.500" cy="8" r="2" fill="#999" /><path d="M3 18h11" /><path d="M10 11h6v6h-6z" fill="#d33" stroke="#d33" stroke-width="1" /><path d="m11.500 12.500 3 3m0-3-3 3" stroke="#fff" stroke-width="1.200" /></svg></button>
      <hr />
      <button aria-label="Windows"><svg width="20" height="17" viewBox="0 0 20 17" fill="#fff"><path d="M0 0h17v2H2v12H0z" /><path d="M3 4h17v13H3z" /></svg></button>
      <button aria-label="Settings"><svg width="20" height="20" viewBox="0 0 20 20"><path d="M8 1h4l.6 2.600 2 1.100L17.200 4l2 3.400-2 1.900v1.400l2 1.900-2 3.400-2.600-.7-2 1.100L12 19H8l-.6-2.600-2-1.100-2.600.7-2-3.400 2-1.900V9.300L.8 7.400l2-3.400 2.600.7 2-1.100z" fill="#fff" /><circle cx="10" cy="10" r="3.300" fill="#151515" /></svg></button>
    </aside>
    <svg class="cursor" width="12" height="26" viewBox="0 0 12 26"><path d="m6 1 5 6H7.500v12H11l-5 6-5-6h3.500V7H1z" fill="#fff" stroke="#777" /></svg>
  </div>
</template>

<style>
body { margin: 0; }
</style>

<style scoped>
* { box-sizing: border-box; }
.window { position: relative; display: flex; flex-direction: column; height: 100vh; overflow: hidden; font: 12px/16px "Open Sans", "Noto Sans", sans-serif; color: #3d3d3d; background: linear-gradient(90deg, #e3e6ea, #e6e4ea 50%, #e9e3e9); }
button { display: flex; align-items: center; justify-content: center; padding: 0; border: 0; background: none; color: inherit; font: inherit; white-space: nowrap; }
input, select { min-width: 0; margin: 0; padding: 0; border: 0; outline: 0; background: none; color: inherit; font: inherit; appearance: none; }
svg { flex: none; display: block; overflow: visible; }
.arial { font-family: "Liberation Sans", Arial, sans-serif; }

.titlebar { display: flex; align-items: center; height: 48px; padding-left: 16px; font-size: 11px; }
.autosave { display: flex; align-items: center; gap: 3px; margin-left: 15px; }
.pill { display: flex; align-items: center; gap: 6px; width: 44px; height: 20px; padding-left: 3px; border: 1px solid #777; border-radius: 10px; background: #fcfcfc; }
.pill input { width: 14px; height: 14px; border-radius: 50%; background: #5c5a60; }
.tb { gap: 4px; width: 38px; height: 32px; justify-content: flex-start; }
.tb.save { width: 40px; justify-content: center; }
.tb.off { color: #b3b3b8; }
.tb.custom { width: 16px; justify-content: center; }
.docname { flex: none; margin-left: 22px; width: 180px; white-space: nowrap; }
.private { gap: 5px; margin-left: 10px; }
.search { display: flex; align-items: center; gap: 13px; width: 345px; height: 32px; margin-left: 18px; padding-left: 13px; border: 1px solid #d6d4d9; border-bottom-color: #bbb; border-radius: 4px; background: #fcfcfc; font-size: 12px; }
.search input { flex: 1; }
.search input::placeholder, .tsearch input::placeholder { color: #6a6a6a; opacity: 1; }
.winctl { display: flex; align-items: center; margin-left: auto; }
.winctl button { width: 48px; height: 32px; }
.winctl .avatar { width: 24px; height: 24px; margin-right: 12px; border-radius: 50%; background: #0b5f4a; color: #d8ece6; font-size: 10px; }

.menu { display: flex; align-items: center; gap: 18px; height: 30px; padding: 2px 12px 0 21px; font-size: 13px; }
.menu > button { height: 20px; border-bottom: 2px solid transparent; }
.menu > button.active { margin: 0 2px 0 6px; border-color: #1d6b50; font-weight: 600; }
.menu-right { display: flex; gap: 8px; height: 24px; margin: -2px 0 0 auto; font-size: 12px; }
.comments { gap: 5px; width: 90px; border: 1px solid #bbb; border-radius: 4px; background: #fdfdfd; color: #333; }
.share { gap: 4px; width: 70px; border-radius: 4px; background: #0f7f41; color: #fff; }

.ribbon { display: flex; height: 100px; margin: 0 8px; border-radius: 8px; background: #fdfdfd; box-shadow: 0 1px 3px #b5b3b9; }
.group { display: flex; flex-direction: column; flex: none; padding: 3px 0 2px; position: relative; }
.group::after { content: ""; position: absolute; right: 0; top: 5px; bottom: 5px; width: 1px; background: #e3e3e3; }
.body { display: flex; flex: 1; }
.glabel { position: relative; display: flex; justify-content: center; align-items: center; height: 16px; font-size: 11px; color: #555; }
.launch { position: absolute; right: 3px; top: 3px; }
.clipboard { width: 110px; } .clipboard .glabel { padding-right: 13px; }
.font { width: 234px; } .font .glabel { padding-right: 16px; }
.align { width: 205px; } .align .glabel { padding-right: 17px; }
.number { width: 106px; } .number .glabel { padding-right: 18px; }
.styles { width: 184px; }
.cells { width: 105px; }
.editing { width: 106px; }
.sens { width: 73px; }
.addins { width: 64px; }
.big { flex-direction: column; justify-content: flex-start; padding-top: 4px; width: 64px; }
.big span { margin: 4px 0 3px; }
.clipboard .big { width: 50px; margin-left: 7px; }
.stack { display: flex; flex-direction: column; gap: 5px; padding-top: 4px; width: 20px; }
.stack button { height: 20px; }
.clipboard .cv { height: 78px; width: 26px; }
.center { justify-content: center; }
.rows { display: flex; flex-direction: column; gap: 6px; padding-top: 8px; }
.row { display: flex; align-items: center; height: 26px; }
.font .rows { padding-left: 7px; }
.ib { width: 26px; height: 24px; font-size: 13px; }
.w20 { width: 20px; } .w24 { width: 24px; }
.cv { width: 16px; height: 24px; }
.cv.w12 { width: 12px; }
.cv.far { width: 20px; }
.sep { width: 1px; height: 22px; margin: 0 2px; background: #e0e0e0; }
.sep.long { height: 62px; margin: 8px 5px 0; }
.sel { display: flex; align-items: center; height: 24px; padding: 0 2px 0 1px; border: 1px solid #a8a8a8; border-radius: 4px; font-size: 12px; }
.sel select { flex: 1; height: 20px; }
.w-font { width: 121px; margin: 0 2px 0 1px; } .w-size { width: 44px; }
.letter { align-items: flex-start; }
.l17 { font-size: 17px; line-height: 22px; } .l15 { font-size: 14px; line-height: 24px; }
.bold { font-weight: 700; }
.ital { font-family: "Liberation Serif", serif; font-style: italic; font-size: 15px; }
.under { text-decoration: underline; text-underline-offset: 2px; }
.fcolor { flex-direction: column; line-height: 14px; font-size: 15px; }
.fcolor i { width: 16px; height: 4px; background: #d3131c; }
.pressed { border: 1px solid #999; border-radius: 4px; background: #e9e9e9; width: 26px; }
.align .body { padding-left: 8px; }
.three { display: flex; flex-direction: column; gap: 0; }
.three > * { height: 26px; }
.three > .sel { height: 24px; margin: 1px 8px 1px 7px; }
.number .row { padding-left: 6px; }
.big-ch { font-size: 17px; color: #444; }
.styles .three, .cells .three { align-items: flex-start; padding-left: 12px; }
.cells .three { padding-left: 11px; }
.cmd { gap: 3px; }
.cmd.wide span { width: 43px; text-align: left; }
.cmd.del span { width: 47px; }
.editing .body { padding-left: 8px; }
.ecol { width: 52px; }
.spread { gap: 4px; }
.collapse { align-self: flex-end; width: 16px; height: 28px; margin: 0 7px 0 auto; }

.formula { display: flex; align-items: center; height: 21px; margin: 9px 9px 8px; font-size: 12px; }
.namebox { display: flex; align-items: center; width: 99px; height: 21px; padding: 0 4px; border-radius: 4px; background: #fdfdfd; }
.namebox input, .fxinput input { flex: 1; }
.formula .grip { margin: 0 9px; }
.fxbox { display: flex; align-items: center; justify-content: space-between; width: 84px; height: 21px; padding: 0 1px 0 5px; border-radius: 4px; background: #fdfdfd; color: #777; }
.fx { color: #333; font: italic 700 16px/20px "Liberation Serif", serif; }
.fxinput { display: flex; flex: 1; align-items: center; height: 21px; margin-left: 6px; padding: 0 3px 0 6px; border-radius: 4px; background: #fdfdfd; }

.sheet-area { display: flex; flex: 1; min-height: 0; }
.sheet { position: relative; flex: 1; overflow: hidden; background: #b2dbe8; font-family: "Liberation Sans", Arial, sans-serif; }
.grid { width: 1294px; table-layout: fixed; border-collapse: separate; border-spacing: 0; font-size: 16px; line-height: 18px; color: #222; }
.rowhead { width: 31px; }
th, td { padding: 0; overflow: hidden; white-space: nowrap; vertical-align: bottom; }
thead tr { height: 21px; }
thead th { border-right: 1px solid #d2d0d3; border-bottom: 2px solid #55907f; background: #dedddf; color: #2f6b55; font-weight: 400; }
thead .corner { border-color: #e9e9ea; background: #e9e9ea; }
.corner svg { margin: 2px 0 0 15px; }
tbody tr { height: 21px; }
tbody tr.short { height: 20px; } tbody tr.tall { height: 22px; }
tbody tr.r1 { height: 96px; }
tbody th { border-bottom: 1px solid #dcdcdc; background: #ebebec; color: #555; font-weight: 400; }
tbody td { background: #b2dbe8; }
.r1 td { border-bottom: 2px solid #5a9488; vertical-align: top; }
.banner { display: flex; align-items: center; height: 90px; padding-left: 24px; gap: 17px; }
.logo { display: grid; place-items: center; }
.logo > * { grid-area: 1 / 1; }
.logo span { padding-bottom: 4px; color: #1c5b70; font: italic 800 41px/44px "Open Sans", "Noto Sans", sans-serif; }
h1 { margin: 5px 0 0; color: #142c33; font-size: 26px; line-height: 32px; }
.r2 th { background: #c9efd6; color: #2f7a58; }
.r2 td { border-bottom: 1px solid #4c8577; }
.r2 .first { border-left: 1px solid #3c7a68; }
.r2 .picked { background: #88abae; }
.lbl { padding-left: 4px; }
.section .lbl { background: #d4ecf2; font-weight: 700; }
.head .lbl, .head .num { background: #1c5b70; color: #fff; font-weight: 700; text-align: center; }
.data .lbl, .data .num { border-bottom: 1px solid #b9dce6; background: #fdfefe; }
.data .lbl { padding-left: 3px; }
.data .num { padding-right: 8px; text-align: right; }
.percent .num { padding-right: 3px; }
.strong .lbl, .strong .num { border-bottom-color: #8fc4d3; }
.total .lbl, .total .num { border-bottom-color: #5fa6bb; }

.chart { position: absolute; left: 835px; top: 119px; display: flex; flex-direction: column; align-items: center; width: 481px; height: 310px; margin: 0; padding-top: 10px; background: #fdfdfd; color: #595959; }
figcaption { font-size: 19px; line-height: 22px; }
.chart svg { margin-top: 15px; }
.chart ul { display: flex; gap: 14px; margin: 17px 0 0; padding: 0 0 0 5px; list-style: none; font-size: 12px; line-height: 16px; }
.chart li { display: flex; align-items: center; gap: 3px; }
.chart li i { width: 4px; height: 4px; }

.vscroll { display: flex; flex-direction: column; align-items: center; gap: 4px; width: 20px; padding: 5px 0 4px; border-left: 1px solid #d9d6da; background: #f0edf0; }
.vtrack { flex: 1; width: 8px; }
.vtrack i { display: block; height: 51%; border-radius: 4px; background: #6b6b6b; }

.sheettabs { display: flex; align-items: center; height: 32px; padding: 0 18px 0 10px; font-size: 13px; color: #444; }
.nav { width: 32px; height: 30px; } .dim { color: #999; }
.tabs { display: flex; flex: none; align-self: stretch; width: 619px; padding-left: 33px; overflow: hidden; }
.tabs button { flex: none; padding: 2px 13px 0; border-right: 1px solid #d6d3d8; }
.tabs button:last-child { padding-right: 0; border: 0; }
.tabs button:first-child { padding-right: 18px; }
.tabs button.active { align-self: flex-start; height: 27px; padding: 0 8px; border: 0; border-radius: 0 0 4px 4px; background: #fdfdfd; color: #222; font-weight: 600; }
.active span { border-bottom: 2px solid #217346; line-height: 18px; }
.tabs button.active + button { padding-left: 18px; }
.more { width: 28px; } .add { width: 38px; }
.sheettabs .grip { margin: 0 14px 0 11px; }
.hscroll { display: flex; flex: 1; align-items: center; gap: 5px; height: 18px; padding: 0 6px 0 5px; border-radius: 9px; background: #f2eff2; }
.htrack { flex: 1; }
.htrack i { display: block; width: 80%; height: 8px; border-radius: 4px; background: #6b6b6b; }

.status { display: flex; align-items: center; height: 22px; padding: 0 8px 0 11px; background: #f3f3f3; font-size: 11px; }
.ready { width: 47px; }
.status .macro { margin-right: 17px; }
.access { margin-left: 3px; font-weight: 600; }
.views { display: flex; height: 22px; margin-left: auto; }
.views button { width: 40px; } .views .on { background: #dcdcdc; }
.pm { width: 18px; }
.zoom { width: 99px; height: 12px; background: linear-gradient(#777, #777) center / 100% 1px no-repeat; }
.zoom::-webkit-slider-thumb { appearance: none; width: 5px; height: 12px; background: #555; }
.pct { width: 34px; text-align: right; }

.taskbar { display: flex; align-items: center; height: 48px; padding: 0 12px 0 19px; background: linear-gradient(90deg, #191c29, #1e1b29 25%, #321a2f 33%, #231a2a 45%, #3b1830 60%, #3c1634 70%, #2c1722 80%, #341f15 90%, #241a1e); color: #f2f2f2; }
.weather { margin-top: -4px; padding-left: 2px; }
.apps { display: flex; align-items: center; margin-left: 100px; }
.apps button { position: relative; width: 44px; height: 44px; }
.run::after { content: ""; position: absolute; left: 19px; bottom: 1px; width: 6px; height: 3px; border-radius: 2px; background: #a5a2a8; }
.chrome svg { margin: -4px 0 0 4px; }
.apps .current { border-radius: 4px; background: #ffffff14; }
.current::after { left: 14px; width: 16px; background: #5fb4ea; }
.tsearch { display: flex; align-items: center; width: 217px; height: 30px; margin: 0 3px 0 5px; padding: 0 5px 0 11px; gap: 10px; border-radius: 15px; background: #f1f1f3; color: #333; font-size: 13px; }
.tsearch input { flex: 1; }
.tray { display: flex; align-items: center; margin-left: auto; font-size: 12px; line-height: 16px; }
.tray .w32 { width: 32px; height: 40px; }
.lang { width: 42px; line-height: 16px; }
.net { gap: 6px; width: 84px; }
.clock { width: 64px; justify-content: flex-end; text-align: right; }
.bell { width: 30px; }

.recorder { position: absolute; right: 82px; top: 191px; display: flex; flex-direction: column; align-items: center; gap: 8px; width: 26px; height: 224px; padding: 3px 0 4px; border-radius: 4px; background: #151515; color: #ddd; font-size: 9px; line-height: 8px; }
.recorder span { margin-top: -3px; }
.recorder hr { width: 22px; margin: -1px 0 0; border: 0; border-top: 1px dashed #eee; }
.cursor { position: absolute; left: 846px; top: 200px; }
</style>
